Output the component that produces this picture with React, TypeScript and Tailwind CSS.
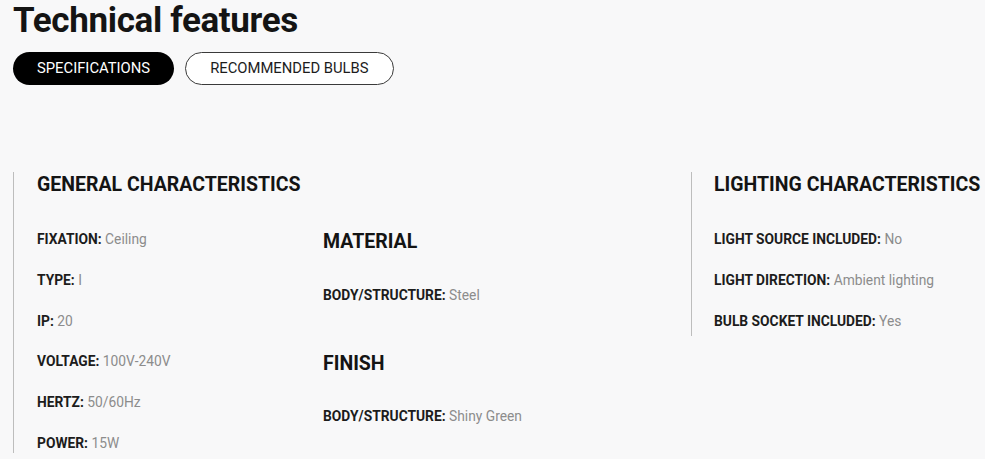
const general = [
  ["FIXATION", "Ceiling"],
  ["TYPE", "I"],
  ["IP", "20"],
  ["VOLTAGE", "100V-240V"],
  ["HERTZ", "50/60Hz"],
  ["POWER", "15W"],
]

const lighting = [
  ["LIGHT SOURCE INCLUDED", "No"],
  ["LIGHT DIRECTION", "Ambient lighting"],
  ["BULB SOCKET INCLUDED", "Yes"],
]

function Row({ label, value }: { label: string; value: string }) {
  return (
    <p className="text-[13.8px] leading-5 whitespace-nowrap">
      <span className="font-bold text-[#1c1c1c]">{label}:</span>{" "}
      <span className="text-[#8c8c8c]">{value}</span>
    </p>
  )
}

export default function App() {
  return (
    <main className="min-h-screen w-full overflow-hidden bg-[#f8f8f9] pl-[13px] font-['Roboto',sans-serif] text-[#141414]">
      <h1 className="text-[35px] leading-[42px] font-bold tracking-[-0.35px]">Technical features</h1>

      <div className="mt-[10px] flex gap-[11px]">
        <button className="h-[33px] rounded-full bg-black px-6 text-[14.8px] text-white">SPECIFICATIONS</button>
        <button className="h-[33px] rounded-full border border-[#3a3a3a] bg-white px-6 text-[14.8px] text-[#1c1c1c]">
          RECOMMENDED BULBS
        </button>
      </div>

      <div className="mt-[87px] flex">
        <section className="w-[678px] border-l border-[#bdbdbd] pl-[23px]">
          <h2 className="pt-[1px] text-[19.5px] leading-6 font-bold">GENERAL CHARACTERISTICS</h2>
          <div className="mt-[32px] flex">
            <div className="flex w-[286px] flex-col gap-[20.8px]">
              {general.map(([l, v]) => (
                <Row key={l} label={l} value={v} />
              ))}
            </div>
            <div className="flex flex-col">
              <h3 className="mt-[1px] text-[19.5px] leading-6 font-bold">MATERIAL</h3>
              <div className="mt-[31px]">
                <Row label="BODY/STRUCTURE" value="Steel" />
              </div>
              <h3 className="mt-[47px] text-[19.5px] leading-6 font-bold">FINISH</h3>
              <div className="mt-[30px]">
                <Row label="BODY/STRUCTURE" value="Shiny Green" />
              </div>
            </div>
          </div>
        </section>

        <section className="self-start border-l border-[#bdbdbd] pb-[5px] pl-[22px]">
          <h2 className="pt-[1px] text-[19.5px] leading-6 font-bold whitespace-nowrap">LIGHTING CHARACTERISTICS</h2>
          <div className="mt-[32px] flex flex-col gap-[20.8px]">
            {lighting.map(([l, v]) => (
              <Row key={l} label={l} value={v} />
            ))}
          </div>
        </section>
      </div>
    </main>
  )
}
